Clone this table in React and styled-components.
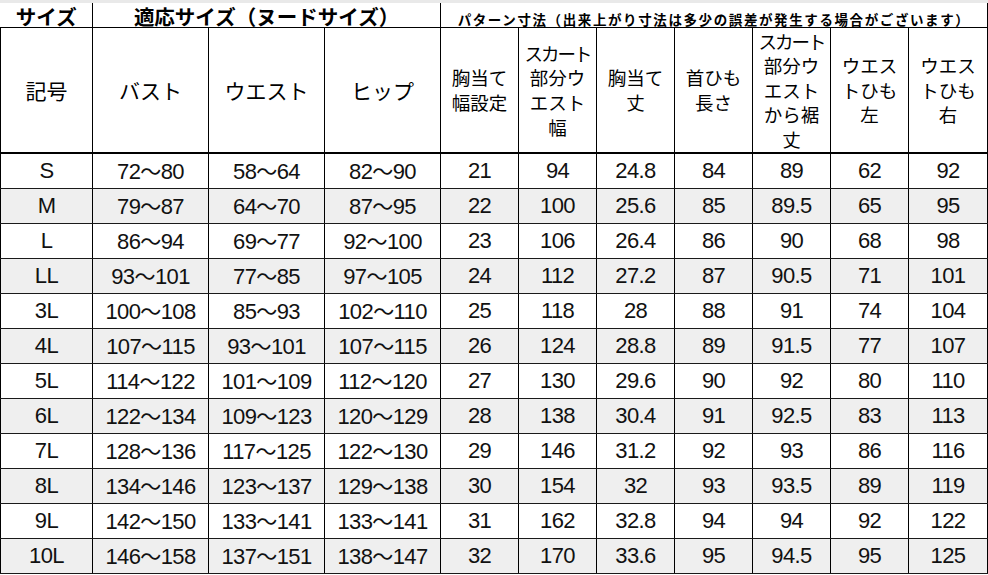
import React from "react";
import styled, { createGlobalStyle } from "styled-components";

const Global = createGlobalStyle`
  html, body { margin: 0; padding: 0; background: #fff; }
  body { width: 988px; height: 575px; overflow: hidden; }
`;

const Page = styled.div`
  width: 988px;
  height: 575px;
  display: flex;
  flex-direction: column;
  background: #fff;
  font-family: "Liberation Sans", "Noto Sans CJK JP", sans-serif;
  color: #111;
`;

const TopStrip = styled.div`
  height: 3px;
  background: #e9e9e9;
  flex: none;
`;

const Sheet = styled.table`
  width: 988px;
  border-collapse: collapse;
  table-layout: fixed;
`;

const TitleCell = styled.th`
  height: 24px;
  padding: 0;
  border-bottom: 1px solid #000;
  border-right: 1px solid #000;
  border-left: ${(p) => (p.$first ? "none" : "1px solid #000")};
  font-family: "Noto Sans CJK JP", sans-serif;
  font-weight: 700;
  font-size: ${(p) => p.$size}px;
  line-height: ${(p) => p.$size + 2}px;
  letter-spacing: ${(p) => p.$ls || 0}px;
  text-align: center;
  vertical-align: bottom;
  white-space: nowrap;
  color: #000;
`;

const LabelCell = styled.th`
  height: 124px;
  padding: 0;
  border: 1px solid #000;
  border-bottom: 2px solid #000;
  font-family: "Noto Sans CJK JP", sans-serif;
  font-weight: 400;
  font-size: ${(p) => (p.$thin ? 18.5 : 21)}px;
  line-height: ${(p) => (p.$thin ? "24.6px" : "24px")};
  text-align: center;
  vertical-align: middle;
  white-space: nowrap;
  color: #000;
`;

const Line = styled.span`
  display: block;
  letter-spacing: ${(p) => p.$ls || 0}px;
`;

const Row = styled.tr`
  background: ${(p) => (p.$shade ? "#efefef" : "#fff")};
`;

const Cell = styled.td`
  height: 32px;
  padding: 1px 0;
  border: 1px solid #1a1a1a;
  border-left: 1px solid #000;
  border-right: 1px solid #000;
  font-family: "Liberation Sans", "Noto Sans CJK JP", sans-serif;
  font-size: 22px;
  line-height: 22px;
  letter-spacing: -0.6px;
  text-align: center;
  vertical-align: middle;
  white-space: nowrap;
  color: #111;
`;

const Tilde = styled.span`
  font-family: "Noto Sans CJK JP", sans-serif;
  font-size: 21px;
  line-height: 22px;
`;

const widths = [92, 116, 116, 116, 78, 78, 78, 78, 78, 78, 79];

const patternHeads = [
  [["胸当て"], ["幅設定"]],
  [["スカート", -2], ["部分ウ"], ["エスト"], ["幅"]],
  [["胸当て"], ["丈"]],
  [["首ひも"], ["長さ"]],
  [["スカート", -2], ["部分ウ"], ["エスト"], ["から裾"], ["丈"]],
  [["ウエス"], ["トひも"], ["左"]],
  [["ウエス"], ["トひも"], ["右"]],
];

const rows = [
  ["S", "72～80", "58～64", "82～90", "21", "94", "24.8", "84", "89", "62", "92"],
  ["M", "79～87", "64～70", "87～95", "22", "100", "25.6", "85", "89.5", "65", "95"],
  ["L", "86～94", "69～77", "92～100", "23", "106", "26.4", "86", "90", "68", "98"],
  ["LL", "93～101", "77～85", "97～105", "24", "112", "27.2", "87", "90.5", "71", "101"],
  ["3L", "100～108", "85～93", "102～110", "25", "118", "28", "88", "91", "74", "104"],
  ["4L", "107～115", "93～101", "107～115", "26", "124", "28.8", "89", "91.5", "77", "107"],
  ["5L", "114～122", "101～109", "112～120", "27", "130", "29.6", "90", "92", "80", "110"],
  ["6L", "122～134", "109～123", "120～129", "28", "138", "30.4", "91", "92.5", "83", "113"],
  ["7L", "128～136", "117～125", "122～130", "29", "146", "31.2", "92", "93", "86", "116"],
  ["8L", "134～146", "123～137", "129～138", "30", "154", "32", "93", "93.5", "89", "119"],
  ["9L", "142～150", "133～141", "133～141", "31", "162", "32.8", "94", "94", "92", "122"],
  ["10L", "146～158", "137～151", "138～147", "32", "170", "33.6", "95", "94.5", "95", "125"],
];

function Value({ text }) {
  if (!text.includes("～")) return text;
  const [a, b] = text.split("～");
  return (
    <>
      {a}
      <Tilde>～</Tilde>
      {b}
    </>
  );
}

export default function App() {
  return (
    <Page>
      <Global />
      <TopStrip />
      <Sheet>
        <colgroup>
          {widths.map((w, i) => (
            <col key={i} style={{ width: w }} />
          ))}
        </colgroup>
        <thead>
          <tr>
            <TitleCell $first $size={20.5}>サイズ</TitleCell>
            <TitleCell colSpan={3} $size={20.5}>
              適応サイズ（ヌードサイズ）
            </TitleCell>
            <TitleCell colSpan={7} $size={13.5} $ls={1.6}>
              パターン寸法（出来上がり寸法は多少の誤差が発生する場合がございます）
            </TitleCell>
          </tr>
          <tr>
            <LabelCell>記号</LabelCell>
            <LabelCell>バスト</LabelCell>
            <LabelCell>ウエスト</LabelCell>
            <LabelCell>ヒップ</LabelCell>
            {patternHeads.map((lines, i) => (
              <LabelCell key={i} $thin>
                {lines.map(([t, ls], j) => (
                  <Line key={j} $ls={ls}>
                    {t}
                  </Line>
                ))}
              </LabelCell>
            ))}
          </tr>
        </thead>
        <tbody>
          {rows.map((r, i) => (
            <Row key={r[0]} $shade={i % 2 === 1}>
              {r.map((v, j) => (
                <Cell key={j}>
                  <Value text={v} />
                </Cell>
              ))}
            </Row>
          ))}
        </tbody>
      </Sheet>
    </Page>
  );
}
